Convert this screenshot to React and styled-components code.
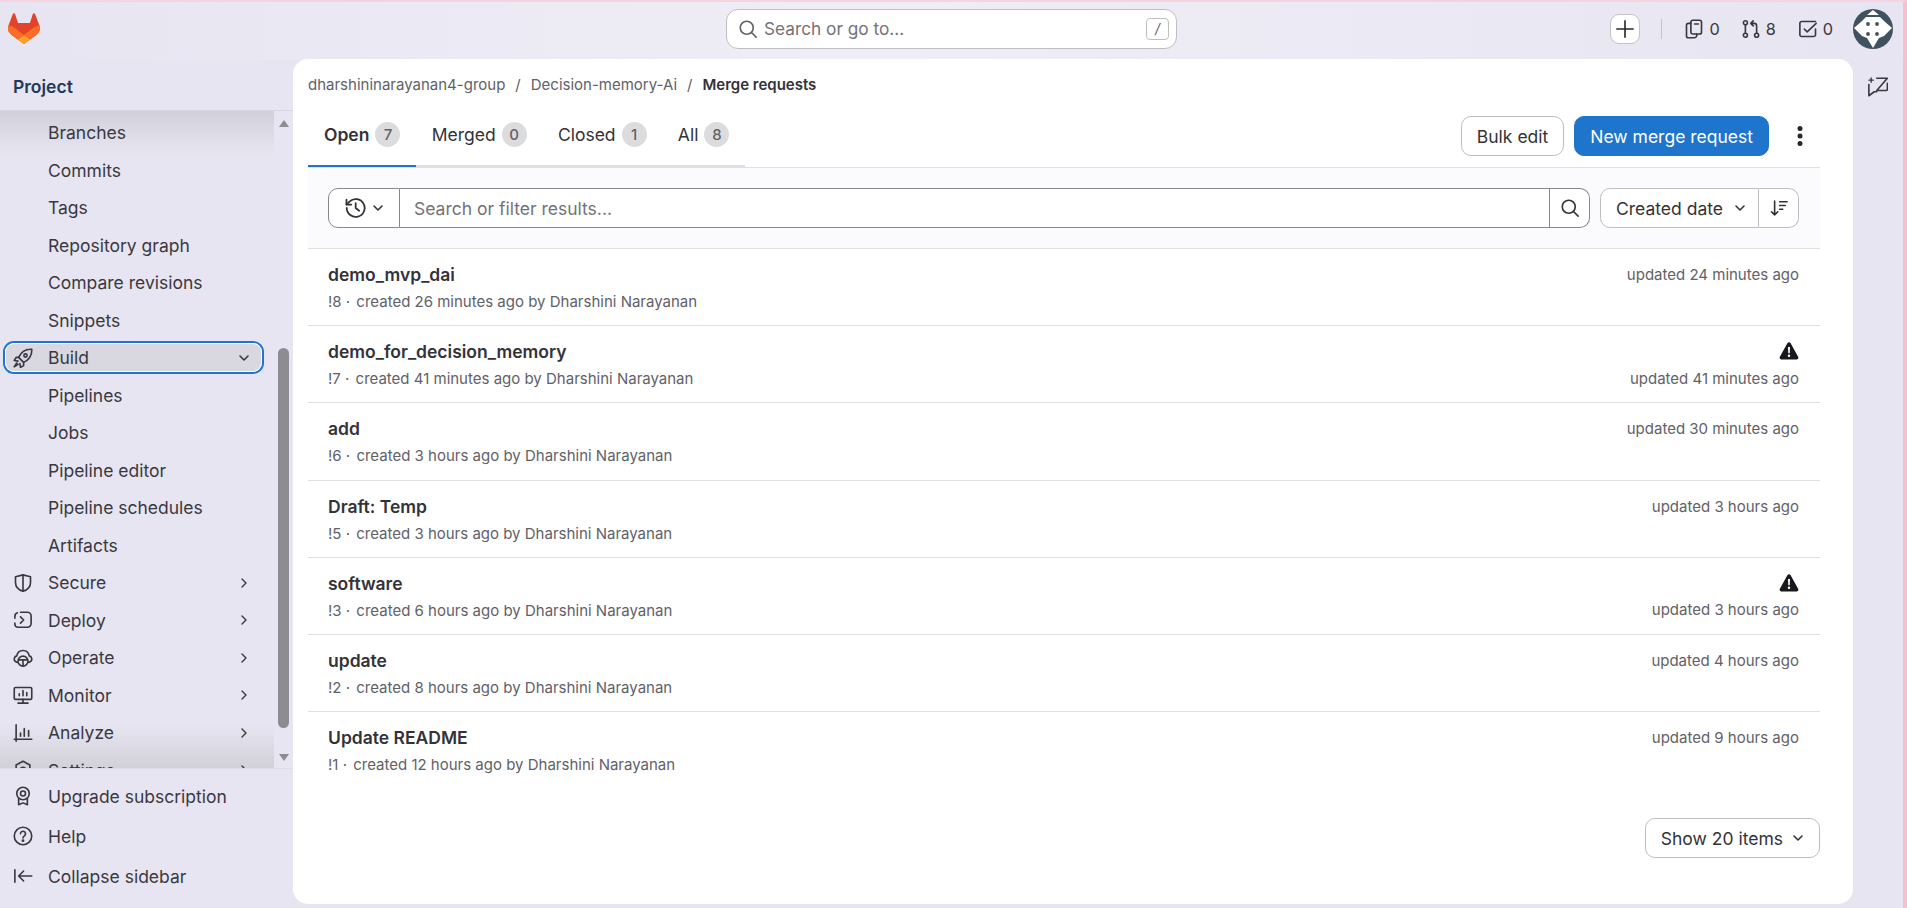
import React from "react";
import styled, { createGlobalStyle } from "styled-components";

const GlobalStyle = createGlobalStyle`
  html, body {
    margin: 0;
    height: 100%;
    overflow: hidden;
  }
  body {
    font-family: Inter, "Noto Sans", sans-serif;
    color: #333238;
  }
`;

const Ico = ({ size = 20, children, ...rest }) => (
  <svg
    width={size}
    height={size}
    viewBox="0 0 16 16"
    fill="none"
    stroke="currentColor"
    strokeWidth="1.3"
    strokeLinecap="round"
    strokeLinejoin="round"
    {...rest}
  >
    {children}
  </svg>
);

const Tanuki = () => (
  <svg width="32" height="31" viewBox="0 0 25 24">
    <path fill="#E24329" d="m24.507 9.5-.034-.09L21.082.562a.896.896 0 0 0-1.694.091l-2.29 7.01H7.825L5.535.653a.898.898 0 0 0-1.694-.09L.451 9.411.416 9.5a6.297 6.297 0 0 0 2.09 7.278l.012.01.03.022 5.16 3.867 2.56 1.935 1.554 1.176a1.051 1.051 0 0 0 1.268 0l1.555-1.176 2.56-1.935 5.197-3.89.014-.01A6.297 6.297 0 0 0 24.507 9.5Z" />
    <path fill="#FC6D26" d="m24.507 9.5-.034-.09a11.44 11.44 0 0 0-4.56 2.051l-7.447 5.632 4.742 3.584 5.197-3.89.014-.01A6.297 6.297 0 0 0 24.507 9.5Z" />
    <path fill="#FCA326" d="m7.707 20.677 2.56 1.935 1.555 1.176a1.051 1.051 0 0 0 1.268 0l1.555-1.176 2.56-1.935-4.743-3.584-4.755 3.584Z" />
    <path fill="#FC6D26" d="M5.01 11.461a11.43 11.43 0 0 0-4.56-2.05L.416 9.5a6.297 6.297 0 0 0 2.09 7.278l.012.01.03.022 5.16 3.867 4.745-3.584-7.444-5.632Z" />
  </svg>
);

const SearchIcon = () => (
  <Ico>
    <circle cx="7" cy="7" r="5.2" />
    <path d="M11 11l3.5 3.5" />
  </Ico>
);
const PlusIcon = () => (
  <Ico>
    <path d="M8 1.5v13M1.5 8h13" />
  </Ico>
);
const ChevronDown = ({ size = 16 }) => (
  <Ico size={size} strokeWidth="1.6">
    <path d="M4 6l4 4 4-4" />
  </Ico>
);
const ChevronRight = () => (
  <Ico size={16} strokeWidth="1.4">
    <path d="M6 4l4 4-4 4" />
  </Ico>
);
const IssuesIcon = () => (
  <Ico>
    <rect x="5.5" y="1" width="8.5" height="11" rx="1.5" />
    <path d="M5.5 3.5H3.5A1.5 1.5 0 0 0 2 5v8.5A1.5 1.5 0 0 0 3.5 15H8a2 2 0 0 0 2-3M8.5 4h3" />
  </Ico>
);
const MergeIcon = () => (
  <Ico>
    <circle cx="3.5" cy="3" r="1.6" />
    <circle cx="3.5" cy="13" r="1.6" />
    <circle cx="12.5" cy="13" r="1.6" />
    <path d="M3.5 4.6v6.8M12.5 11.4V5.5A2 2 0 0 0 10.5 3.5H8M9.8 1.5L7.8 3.5l2 2" />
  </Ico>
);
const TodoIcon = () => (
  <Ico>
    <path d="M14 2H3a1.5 1.5 0 0 0-1.5 1.5v9A1.5 1.5 0 0 0 3 14h9.5a1.5 1.5 0 0 0 1.5-1.5V8" />
    <path d="M5 8l2.3 2.3L14.5 3.5" />
  </Ico>
);
const CommentIcon = () => (
  <Ico size={20}>
    <path d="M7 1h8.5L7 10.8h7.5a1 1 0 0 0 1-1V5" />
    <path d="M.7 6v9L5 11.8h2" />
    <path d="M2.5 .8v3.4M.8 2.5h3.4" strokeWidth="1.1" />
  </Ico>
);
const Avatar = () => (
  <svg width="40" height="40" viewBox="0 0 40 40">
    <circle cx="20" cy="20" r="20" fill="#40525f" />
    <path fill="#fff" d="M20 1l6 5H14zM13 8h14l4 4 8 7-8 8-5 2-6 10-6-10-5-2-8-8 8-7z" />
    <g fill="#40525f">
      <circle cx="15" cy="15" r="1.9" />
      <circle cx="24" cy="15" r="1.9" />
      <circle cx="15" cy="25" r="1.9" />
      <circle cx="24" cy="25" r="1.9" />
    </g>
  </svg>
);
const RocketIcon = () => (
  <Ico>
    <path d="M15 1c-5-.3-8.500 2-10.500 6.500l4 4C13 9.500 15.300 6 15 1z" />
    <circle cx="10" cy="6" r="1.300" />
    <path d="M4.500 7.500H2.500L1 10l3 .5M8.500 11.500v2.500L6 15.500l-.5-3M3 12l-2 3 3-2" />
  </Ico>
);
const ShieldIcon = () => (
  <Ico>
    <path d="M8 1.500l6 1.500v4.500c0 3.500-2.500 6-6 7-3.500-1-6-3.500-6-7V3z" />
    <path d="M8 1.500v13" />
  </Ico>
);
const DeployIcon = () => (
  <Ico>
    <path d="M6 1.800h5.500a3 3 0 0 1 3 3v6a3 3 0 0 1-3 3H4a2.500 2.500 0 0 1-2.500-2.500V10.500" />
    <path d="M1.500 6.500V5a3 3 0 0 1 2-2.800M6 5.500L8.500 8 6 10.500" />
  </Ico>
);
const OperateIcon = () => (
  <Ico>
    <path d="M3.500 11.500C1.800 11 .8 9.800 1 8.500c.2-1.200 1-2 2-2.200C3.500 3.500 5.500 2 8 2s4.500 1.500 5 4.300c1 .2 1.800 1 2 2.200.2 1.300-.8 2.500-2.500 3" />
    <circle cx="8" cy="10.500" r="4" fill="#e7e5f1" />
    <path d="M4.500 9.500h7M8 10.500v4" />
  </Ico>
);
const MonitorIcon = () => (
  <Ico>
    <rect x="1" y="2" width="14" height="9.500" rx="1" />
    <path d="M4 14.500h8M8 11.500v3M5 8.500V7M8 8.500V4.500M11 8.500V6" />
  </Ico>
);
const AnalyzeIcon = () => (
  <Ico>
    <path d="M2.500 1.500v13M1 13h14M6 10.500V8M9 10.500V4.500M12.500 10.500V6" />
  </Ico>
);
const SettingsIcon = () => (
  <Ico>
    <path d="M8 1l5.500 3v7L8 15l-5.500-4V4z" />
    <circle cx="8" cy="8" r="2.200" />
  </Ico>
);
const BadgeIcon = () => (
  <Ico>
    <circle cx="8" cy="6" r="5" />
    <circle cx="8" cy="6" r="2" />
    <path d="M4.500 10v5l3.500-1.500 3.500 1.500v-5" />
  </Ico>
);
const HelpIcon = () => (
  <Ico>
    <circle cx="8" cy="8" r="7" />
    <path d="M6 6.200a2 2 0 1 1 3.300 1.500C8.500 8.300 8 8.700 8 9.500" />
    <circle cx="8" cy="11.700" r=".5" fill="currentColor" />
  </Ico>
);
const CollapseIcon = () => (
  <Ico>
    <path d="M1.500 3v10M15 8H5M8.500 4L4.500 8l4 4" />
  </Ico>
);
const HistoryIcon = () => (
  <Ico size={22}>
    <path d="M2 8a6.500 6.500 0 1 0 2-4.700L1.800 5.500" />
    <path d="M1.800 2v3.500h3.500M8.500 4.500V8l2.500 2" />
  </Ico>
);
const SortIcon = () => (
  <Ico size={20}>
    <path d="M4.500 2.500v11M2 11l2.500 2.500L7 11M8.500 3h6M8.500 6h4.500M8.500 9H11" />
  </Ico>
);
const KebabIcon = () => (
  <svg width="20" height="20" viewBox="0 0 16 16" fill="currentColor">
    <circle cx="8" cy="2" r="2" />
    <circle cx="8" cy="8" r="2" />
    <circle cx="8" cy="14" r="2" />
  </svg>
);
const WarningIcon = () => (
  <svg width="20" height="20" viewBox="0 0 16 16">
    <path fill="#18171d" d="M6.700 1.700a1.500 1.500 0 0 1 2.600 0l6 10.800A1.500 1.500 0 0 1 14 14.800H2a1.500 1.500 0 0 1-1.300-2.300z" />
    <path fill="#fff" d="M7.200 4.800h1.600l-.2 5H7.400zM8 10.700a1 1 0 1 1 0 2 1 1 0 0 1 0-2z" />
  </svg>
);

const subItemsTop = ["Branches", "Commits", "Tags", "Repository graph", "Compare revisions", "Snippets"];
const subItemsBuild = ["Pipelines", "Jobs", "Pipeline editor", "Pipeline schedules", "Artifacts"];
const sections = [
  { label: "Secure", icon: <ShieldIcon /> },
  { label: "Deploy", icon: <DeployIcon /> },
  { label: "Operate", icon: <OperateIcon /> },
  { label: "Monitor", icon: <MonitorIcon /> },
  { label: "Analyze", icon: <AnalyzeIcon /> },
  { label: "Settings", icon: <SettingsIcon /> },
];

const tabs = [
  { label: "Open", count: 7, active: true },
  { label: "Merged", count: 0 },
  { label: "Closed", count: 1 },
  { label: "All", count: 8 },
];

const requests = [
  { title: "demo_mvp_dai", iid: "!8", meta: "created 26 minutes ago by Dharshini Narayanan", updated: "updated 24 minutes ago" },
  { title: "demo_for_decision_memory", iid: "!7", meta: "created 41 minutes ago by Dharshini Narayanan", updated: "updated 41 minutes ago", warning: true },
  { title: "add", iid: "!6", meta: "created 3 hours ago by Dharshini Narayanan", updated: "updated 30 minutes ago" },
  { title: "Draft: Temp", iid: "!5", meta: "created 3 hours ago by Dharshini Narayanan", updated: "updated 3 hours ago" },
  { title: "software", iid: "!3", meta: "created 6 hours ago by Dharshini Narayanan", updated: "updated 3 hours ago", warning: true },
  { title: "update", iid: "!2", meta: "created 8 hours ago by Dharshini Narayanan", updated: "updated 4 hours ago" },
  { title: "Update README", iid: "!1", meta: "created 12 hours ago by Dharshini Narayanan", updated: "updated 9 hours ago" },
];

export default function App() {
  return (
    <Frame>
      <GlobalStyle />
      <TopBar>
        <LogoSlot>
          <Tanuki />
        </LogoSlot>
        <GlobalSearch>
          <SearchIcon />
          <SearchHint>Search or go to...</SearchHint>
          <Kbd>/</Kbd>
        </GlobalSearch>
        <TopActions>
          <PlusButton>
            <PlusIcon />
          </PlusButton>
          <TopDivider />
          <Counter $gap={21}>
            <IssuesIcon /> 0
          </Counter>
          <Counter $gap={22}>
            <MergeIcon /> 8
          </Counter>
          <Counter $gap={20}>
            <TodoIcon /> 0
          </Counter>
          <Avatar />
        </TopActions>
      </TopBar>
      <Body>
        <Sidebar>
          <SidebarTitle>Project</SidebarTitle>
          <NavArea>
            <ShadeTop />
            <ShadeBottom />
            <NavList>
              {subItemsTop.map((name) => (
                <SubItem key={name}>{name}</SubItem>
              ))}
              <GroupItem $focused>
                <IconSlot>
                  <RocketIcon />
                </IconSlot>
                <GroupLabel>Build</GroupLabel>
                <ChevronDown />
              </GroupItem>
              {subItemsBuild.map((name) => (
                <SubItem key={name}>{name}</SubItem>
              ))}
              {sections.map((s) => (
                <GroupItem key={s.label}>
                  <IconSlot>{s.icon}</IconSlot>
                  <GroupLabel>{s.label}</GroupLabel>
                  <ChevronRight />
                </GroupItem>
              ))}
            </NavList>
            <ScrollTrack>
              <ArrowUp />
              <Thumb />
              <ArrowDown />
            </ScrollTrack>
          </NavArea>
          <SidebarFooter>
            <FooterItem>
              <IconSlot>
                <BadgeIcon />
              </IconSlot>
              Upgrade subscription
            </FooterItem>
            <FooterItem>
              <IconSlot>
                <HelpIcon />
              </IconSlot>
              Help
            </FooterItem>
            <FooterItem>
              <IconSlot>
                <CollapseIcon />
              </IconSlot>
              Collapse sidebar
            </FooterItem>
          </SidebarFooter>
        </Sidebar>
        <Card>
          <Breadcrumbs>
            <span>dharshininarayanan4-group</span>
            <span>/</span>
            <span>Decision-memory-Ai</span>
            <span>/</span>
            <strong>Merge requests</strong>
          </Breadcrumbs>
          <TabRow>
            <Tabs>
              {tabs.map((t) => (
                <Tab key={t.label} $active={t.active}>
                  {t.label}
                  <Count>{t.count}</Count>
                </Tab>
              ))}
            </Tabs>
            <TabActions>
              <Button>Bulk edit</Button>
              <PrimaryButton>New merge request</PrimaryButton>
              <KebabSlot>
                <KebabIcon />
              </KebabSlot>
            </TabActions>
          </TabRow>
          <FilterBar>
            <FilterGroup>
              <HistoryButton>
                <HistoryIcon />
                <ChevronDown />
              </HistoryButton>
              <FilterInput>Search or filter results...</FilterInput>
              <FilterSubmit>
                <SearchIcon />
              </FilterSubmit>
            </FilterGroup>
            <SortGroup>
              <SortSelect>
                Created date
                <ChevronDown />
              </SortSelect>
              <SortDirection>
                <SortIcon />
              </SortDirection>
            </SortGroup>
          </FilterBar>
          <List>
            {requests.map((r) => (
              <Row key={r.iid}>
                <div>
                  <RowTitle>{r.title}</RowTitle>
                  <RowMeta>
                    <Iid>{r.iid} ·</Iid> {r.meta}
                  </RowMeta>
                </div>
                <RowRight>
                  {r.warning ? (
                    <WarningSlot>
                      <WarningIcon />
                    </WarningSlot>
                  ) : null}
                  <RowUpdated>{r.updated}</RowUpdated>
                </RowRight>
              </Row>
            ))}
          </List>
          <Pager>
            <PagerButton>
              Show 20 items
              <ChevronDown />
            </PagerButton>
          </Pager>
        </Card>
        <RightRail>
          <CommentIcon />
        </RightRail>
      </Body>
    </Frame>
  );
}

const Frame = styled.div`
  display: flex;
  flex-direction: column;
  width: 1907px;
  height: 908px;
  box-sizing: border-box;
  overflow: hidden;
  border-top: 2px solid #f6d3e1;
  border-right: 4px solid #f8bfd3;
  background: linear-gradient(90deg, #e7e5f1 0%, #efedf5 45%, #e7e5f1 100%) top / 100% 58px no-repeat, #e7e5f1;
`;

const TopBar = styled.header`
  display: flex;
  align-items: center;
  height: 57px;
  box-sizing: border-box;
  padding-bottom: 4px;
  flex: none;
`;

const LogoSlot = styled.div`
  display: flex;
  width: 726px;
  padding-left: 8px;
  box-sizing: border-box;
`;

const GlobalSearch = styled.div`
  display: flex;
  align-items: center;
  gap: 6px;
  width: 451px;
  height: 40px;
  box-sizing: border-box;
  padding: 0 7px 0 11px;
  background: #fff;
  border: 1px solid #bfbfc3;
  border-radius: 12px;
  color: #626168;
`;

const SearchHint = styled.span`
  flex: 1;
  font-size: 17.25px;
  color: #737278;
`;

const Kbd = styled.span`
  display: flex;
  align-items: center;
  justify-content: center;
  width: 23px;
  height: 22px;
  box-sizing: border-box;
  border: 1px solid #bfbfc3;
  border-radius: 4px;
  font-size: 14px;
  font-style: italic;
  color: #626168;
`;

const TopActions = styled.div`
  display: flex;
  align-items: center;
  margin-left: auto;
  padding-right: 10px;
`;

const PlusButton = styled.button`
  display: flex;
  align-items: center;
  justify-content: center;
  width: 30px;
  height: 30px;
  padding: 0;
  background: #fff;
  border: 1px solid #c4c4c8;
  border-radius: 9px;
  color: #28272d;
`;

const TopDivider = styled.div`
  width: 1px;
  height: 20px;
  margin: 0 22px 0 21px;
  background: #c4c4c8;
`;

const Counter = styled.div`
  display: flex;
  align-items: center;
  gap: 5px;
  margin-right: ${(p) => p.$gap}px;
  font-size: 16.25px;
  color: #3a383f;
`;

const Body = styled.div`
  display: flex;
  flex: 1;
  min-height: 0;
`;

const Sidebar = styled.aside`
  display: flex;
  flex-direction: column;
  flex: none;
  width: 293px;
  height: 849px;
`;

const SidebarTitle = styled.div`
  flex: none;
  height: 52px;
  box-sizing: border-box;
  padding: 17px 0 0 13px;
  border-bottom: 1px solid #d7d6de;
  font-size: 17.5px;
  font-weight: 600;
  color: #1f3a5a;
`;

const NavArea = styled.nav`
  position: relative;
  display: flex;
  height: 657px;
  overflow: hidden;
`;

const NavList = styled.div`
  position: relative;
  flex: 1;
  min-width: 0;
  padding: 3px 12px 0 5px;
`;

const SubItem = styled.div`
  display: flex;
  align-items: center;
  height: 37.5px;
  padding-left: 43px;
  font-size: 17.5px;
  color: #3a383f;
`;

const GroupItem = styled.div`
  display: flex;
  align-items: center;
  height: ${(p) => (p.$focused ? "29px" : "37.5px")};
  box-sizing: border-box;
  margin: ${(p) => (p.$focused ? "4.25px 0" : "0")};
  padding: 0 10px 0 8px;
  font-size: 17.5px;
  color: #3a383f;
  border-radius: 9px;
  background: ${(p) => (p.$focused ? "#d9d8e0" : "transparent")};
  box-shadow: ${(p) => (p.$focused ? "inset 0 0 0 1px #fff, 0 0 0 2px #1f75cb" : "none")};
`;

const IconSlot = styled.span`
  display: flex;
  flex: none;
  width: 35px;
  color: #3a383f;
`;

const GroupLabel = styled.span`
  flex: 1;
`;

const ShadeTop = styled.div`
  position: absolute;
  top: 0;
  left: 0;
  width: 274px;
  height: 44px;
  background: linear-gradient(#d2d1d9, rgba(210, 209, 217, 0));
  pointer-events: none;
`;

const ShadeBottom = styled.div`
  position: absolute;
  bottom: 0;
  left: 0;
  width: 274px;
  height: 44px;
  background: linear-gradient(rgba(210, 209, 217, 0), #d2d1d9);
  pointer-events: none;
`;

const ScrollTrack = styled.div`
  display: flex;
  flex: none;
  flex-direction: column;
  align-items: center;
  width: 19px;
  padding-top: 9px;
  box-sizing: border-box;
`;

const ArrowUp = styled.div`
  width: 0;
  height: 0;
  border-left: 5px solid transparent;
  border-right: 5px solid transparent;
  border-bottom: 7px solid #8d8c91;
`;

const Thumb = styled.div`
  width: 11px;
  height: 380px;
  margin-top: 221px;
  border-radius: 6px;
  background: #8d8c91;
`;

const ArrowDown = styled.div`
  width: 0;
  height: 0;
  margin-top: 26px;
  border-left: 5px solid transparent;
  border-right: 5px solid transparent;
  border-top: 7px solid #8d8c91;
`;

const SidebarFooter = styled.div`
  flex: 1;
  border-top: 1px solid #dedde5;
  padding: 7px 0 0 13px;
`;

const FooterItem = styled.div`
  display: flex;
  align-items: center;
  height: 40px;
  font-size: 17.5px;
  color: #3a383f;
`;

const Card = styled.main`
  flex: none;
  display: flex;
  flex-direction: column;
  width: 1560px;
  height: 845px;
  box-sizing: border-box;
  padding: 0 33px 0 15px;
  background: #fff;
  border-radius: 15px;
`;

const Breadcrumbs = styled.div`
  display: flex;
  align-items: center;
  gap: 10px;
  height: 50px;
  padding-top: 1px;
  box-sizing: border-box;
  font-size: 15px;
  color: #626168;

  strong {
    font-weight: 600;
    color: #333238;
  }
`;

const TabRow = styled.div`
  display: flex;
  align-items: flex-start;
  justify-content: space-between;
  height: 58px;
  flex: none;
`;

const Tabs = styled.div`
  display: flex;
  height: 58px;
  box-sizing: border-box;
  border-bottom: 2px solid #e0e0e3;
`;

const Tab = styled.div`
  display: flex;
  align-items: center;
  gap: 6px;
  height: 58px;
  box-sizing: border-box;
  padding: 0 15.25px 5px 16px;
  font-size: 17.5px;
  font-weight: ${(p) => (p.$active ? 600 : 400)};
  color: #333238;
  border-bottom: 2px solid ${(p) => (p.$active ? "#1f75cb" : "transparent")};
`;

const Count = styled.span`
  display: flex;
  align-items: center;
  justify-content: center;
  width: 25px;
  height: 25px;
  border-radius: 50%;
  background: #dcdcde;
  font-size: 15px;
  font-weight: 500;
  color: #626168;
`;

const TabActions = styled.div`
  display: flex;
  align-items: center;
  gap: 10px;
  height: 40px;
  margin-top: 7px;
`;

const Button = styled.button`
  display: flex;
  align-items: center;
  gap: 8px;
  height: 40px;
  box-sizing: border-box;
  padding: 0 15px;
  background: #fff;
  border: 1px solid #bfbfc3;
  border-radius: 10px;
  font-family: inherit;
  font-size: 17.5px;
  color: #333238;
`;

const PrimaryButton = styled(Button)`
  background: #1f75cb;
  border-color: #1f75cb;
  color: #fff;
`;

const PagerButton = styled(Button)`
  gap: 7px;
  padding: 0 13px 0 15px;
`;

const KebabSlot = styled.span`
  display: flex;
  justify-content: center;
  width: 41px;
  color: #28272d;
`;

const FilterBar = styled.div`
  display: flex;
  flex: none;
  align-items: center;
  gap: 10px;
  height: 82px;
  box-sizing: border-box;
  padding: 0 21px 0 20px;
  background: #fbfafd;
  border-top: 1px solid #e0e0e3;
  border-bottom: 1px solid #e0e0e3;
  width: 1512px;
`;

const FilterGroup = styled.div`
  display: flex;
  flex: 1;
  height: 40px;
`;

const HistoryButton = styled.div`
  display: flex;
  align-items: center;
  gap: 4px;
  width: 72px;
  box-sizing: border-box;
  padding-left: 15px;
  background: #fff;
  border: 1px solid #89888d;
  border-radius: 10px 0 0 10px;
  color: #333238;
`;

const FilterInput = styled.div`
  flex: 1;
  display: flex;
  align-items: center;
  padding-left: 14px;
  background: #fff;
  border: 1px solid #89888d;
  border-left: none;
  font-size: 17.5px;
  color: #737278;
`;

const FilterSubmit = styled.div`
  display: flex;
  align-items: center;
  justify-content: center;
  width: 40px;
  box-sizing: border-box;
  background: #fff;
  border: 1px solid #89888d;
  border-left: none;
  border-radius: 0 10px 10px 0;
  color: #333238;
`;

const SortGroup = styled.div`
  display: flex;
  height: 40px;
`;

const SortSelect = styled.div`
  display: flex;
  align-items: center;
  gap: 9px;
  width: 159px;
  box-sizing: border-box;
  padding-left: 15px;
  white-space: nowrap;
  background: #fff;
  border: 1px solid #bfbfc3;
  border-radius: 10px 0 0 10px;
  font-size: 17.5px;
  color: #333238;
`;

const SortDirection = styled.div`
  display: flex;
  align-items: center;
  justify-content: center;
  width: 40px;
  box-sizing: border-box;
  background: #fff;
  border: 1px solid #bfbfc3;
  border-left: none;
  border-radius: 0 10px 10px 0;
  color: #333238;
`;

const List = styled.div`
  width: 1512px;
  flex: none;
`;

const Row = styled.div`
  display: flex;
  justify-content: space-between;
  height: 77.2px;
  box-sizing: border-box;
  padding: 13px 21px 0 20px;
  border-bottom: 1px solid #e0e0e3;

  &:last-child {
    border-bottom: none;
  }
`;

const RowTitle = styled.div`
  font-size: 17.5px;
  line-height: 25px;
  font-weight: 600;
  color: #333238;
`;

const RowMeta = styled.div`
  font-size: 15px;
  line-height: 22px;
  margin-top: 4px;
  color: #626168;
`;

const Iid = styled.span`
  margin-right: 2px;
`;

const RowRight = styled.div`
  display: flex;
  flex-direction: column;
  align-items: flex-end;
`;

const WarningSlot = styled.div`
  display: flex;
  margin: 2px 0 4.5px;
`;

const RowUpdated = styled.div`
  font-size: 15px;
  line-height: 25px;
  color: #626168;
`;

const Pager = styled.div`
  display: flex;
  justify-content: flex-end;
  width: 1512px;
  margin-top: 29px;
`;

const RightRail = styled.div`
  display: flex;
  justify-content: center;
  flex: 1;
  padding-top: 18px;
  color: #3a383f;
`;
